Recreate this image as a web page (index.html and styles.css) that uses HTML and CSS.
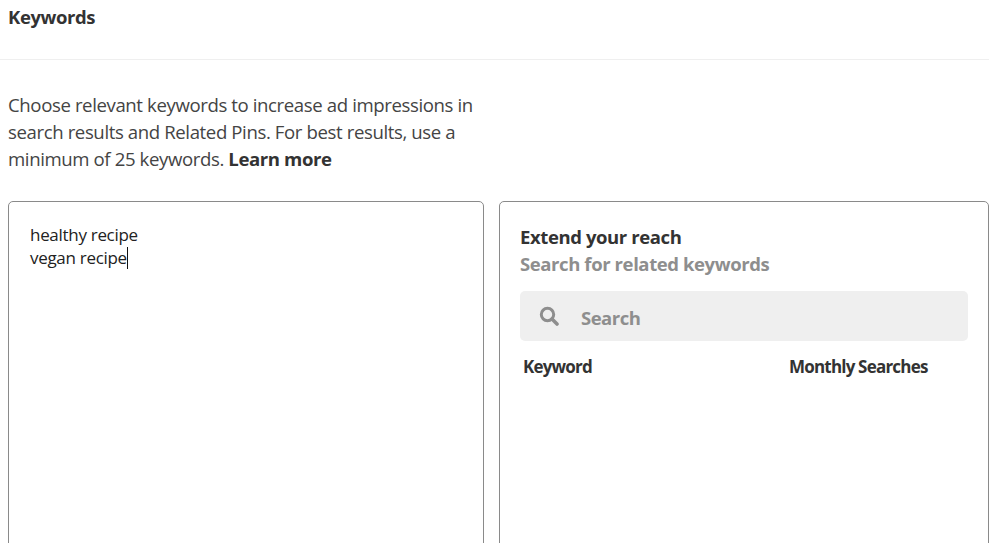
FILE: index.html
```html
<!DOCTYPE html>
<html lang="en">
<head>
<meta charset="utf-8">
<title>Keywords</title>
<link rel="stylesheet" href="styles.css">
</head>
<body>
<header class="head"><h1 class="title">Keywords</h1></header>
<p class="intro">Choose relevant keywords to increase ad impressions in search results and Related Pins. For best results, use a minimum of 25 keywords. <b class="learn">Learn more</b></p>
<div class="columns">
  <section class="box editor">
    <div class="line">healthy recipe</div>
    <div class="line">vegan recipe<span class="caret"></span></div>
  </section>
  <section class="box reach">
    <h2 class="reach-title">Extend your reach</h2>
    <div class="reach-sub">Search for related keywords</div>
    <div class="search">
      <svg class="search-icon" viewBox="0 0 20 20" width="20" height="20" aria-hidden="true"><circle cx="8.5" cy="8.5" r="6.2" fill="none" stroke="#8e8e8e" stroke-width="3"/><path d="M13 13l5 5" stroke="#8e8e8e" stroke-width="3.6" stroke-linecap="round"/></svg>
      <span class="search-label">Search</span>
    </div>
    <div class="table-head"><span>Keyword</span><span class="monthly">Monthly Searches</span></div>
  </section>
</div>
</body>
</html>
```
FILE: styles.css
```css
html, body { margin: 0; padding: 0; height: 543px; overflow: hidden; background: #fff; }
body { font-family: "Open Sans", "Noto Sans", sans-serif; color: #333; }
.head { height: 59px; border-bottom: 1px solid #efefef; box-sizing: content-box; }
.title { margin: 0; padding: 5px 0 0 8px; font-size: 18.5px; line-height: 24px; font-weight: 700; letter-spacing: -0.4px; color: #333; }
.intro { margin: 0; padding: 31px 0 0 8px; width: 490px; font-size: 18.6px; line-height: 27px; letter-spacing: -0.39px; color: #444; box-sizing: border-box; }
.learn { font-weight: 700; color: #333; letter-spacing: -0.42px; }
.columns { display: grid; grid-template-columns: 476px 490px; gap: 15px; padding: 29px 0 0 8px; }
.box { height: 400px; box-sizing: border-box; border: 1px solid #8a8a8a; border-radius: 5px; }
.editor { padding: 21px 21px; font-size: 17px; line-height: 23px; letter-spacing: -0.3px; color: #222; }
.line { height: 23px; white-space: nowrap; }
.caret { display: inline-block; width: 1px; height: 22px; background: #111; vertical-align: -5px; }
.reach { padding: 21px 20px 0 20px; }
.reach-title { margin: 0; font-size: 18.5px; line-height: 27px; font-weight: 700; letter-spacing: -0.4px; color: #333; }
.reach-sub { font-size: 18.5px; line-height: 27px; font-weight: 700; letter-spacing: -0.4px; color: #8e8e8e; }
.search { display: flex; align-items: center; height: 50px; margin-top: 14px; padding-left: 19px; background: #efefef; border-radius: 5px; }
.search-icon { flex: none; }
.search-label { margin-left: 22px; padding-top: 3px; font-size: 18.5px; font-weight: 700; letter-spacing: -0.5px; color: #8e8e8e; }
.table-head { display: flex; margin-top: 13px; padding-left: 3px; font-size: 17px; line-height: 26px; font-weight: 700; letter-spacing: -0.8px; color: #333; }
.monthly { margin-left: 197px; }
```
